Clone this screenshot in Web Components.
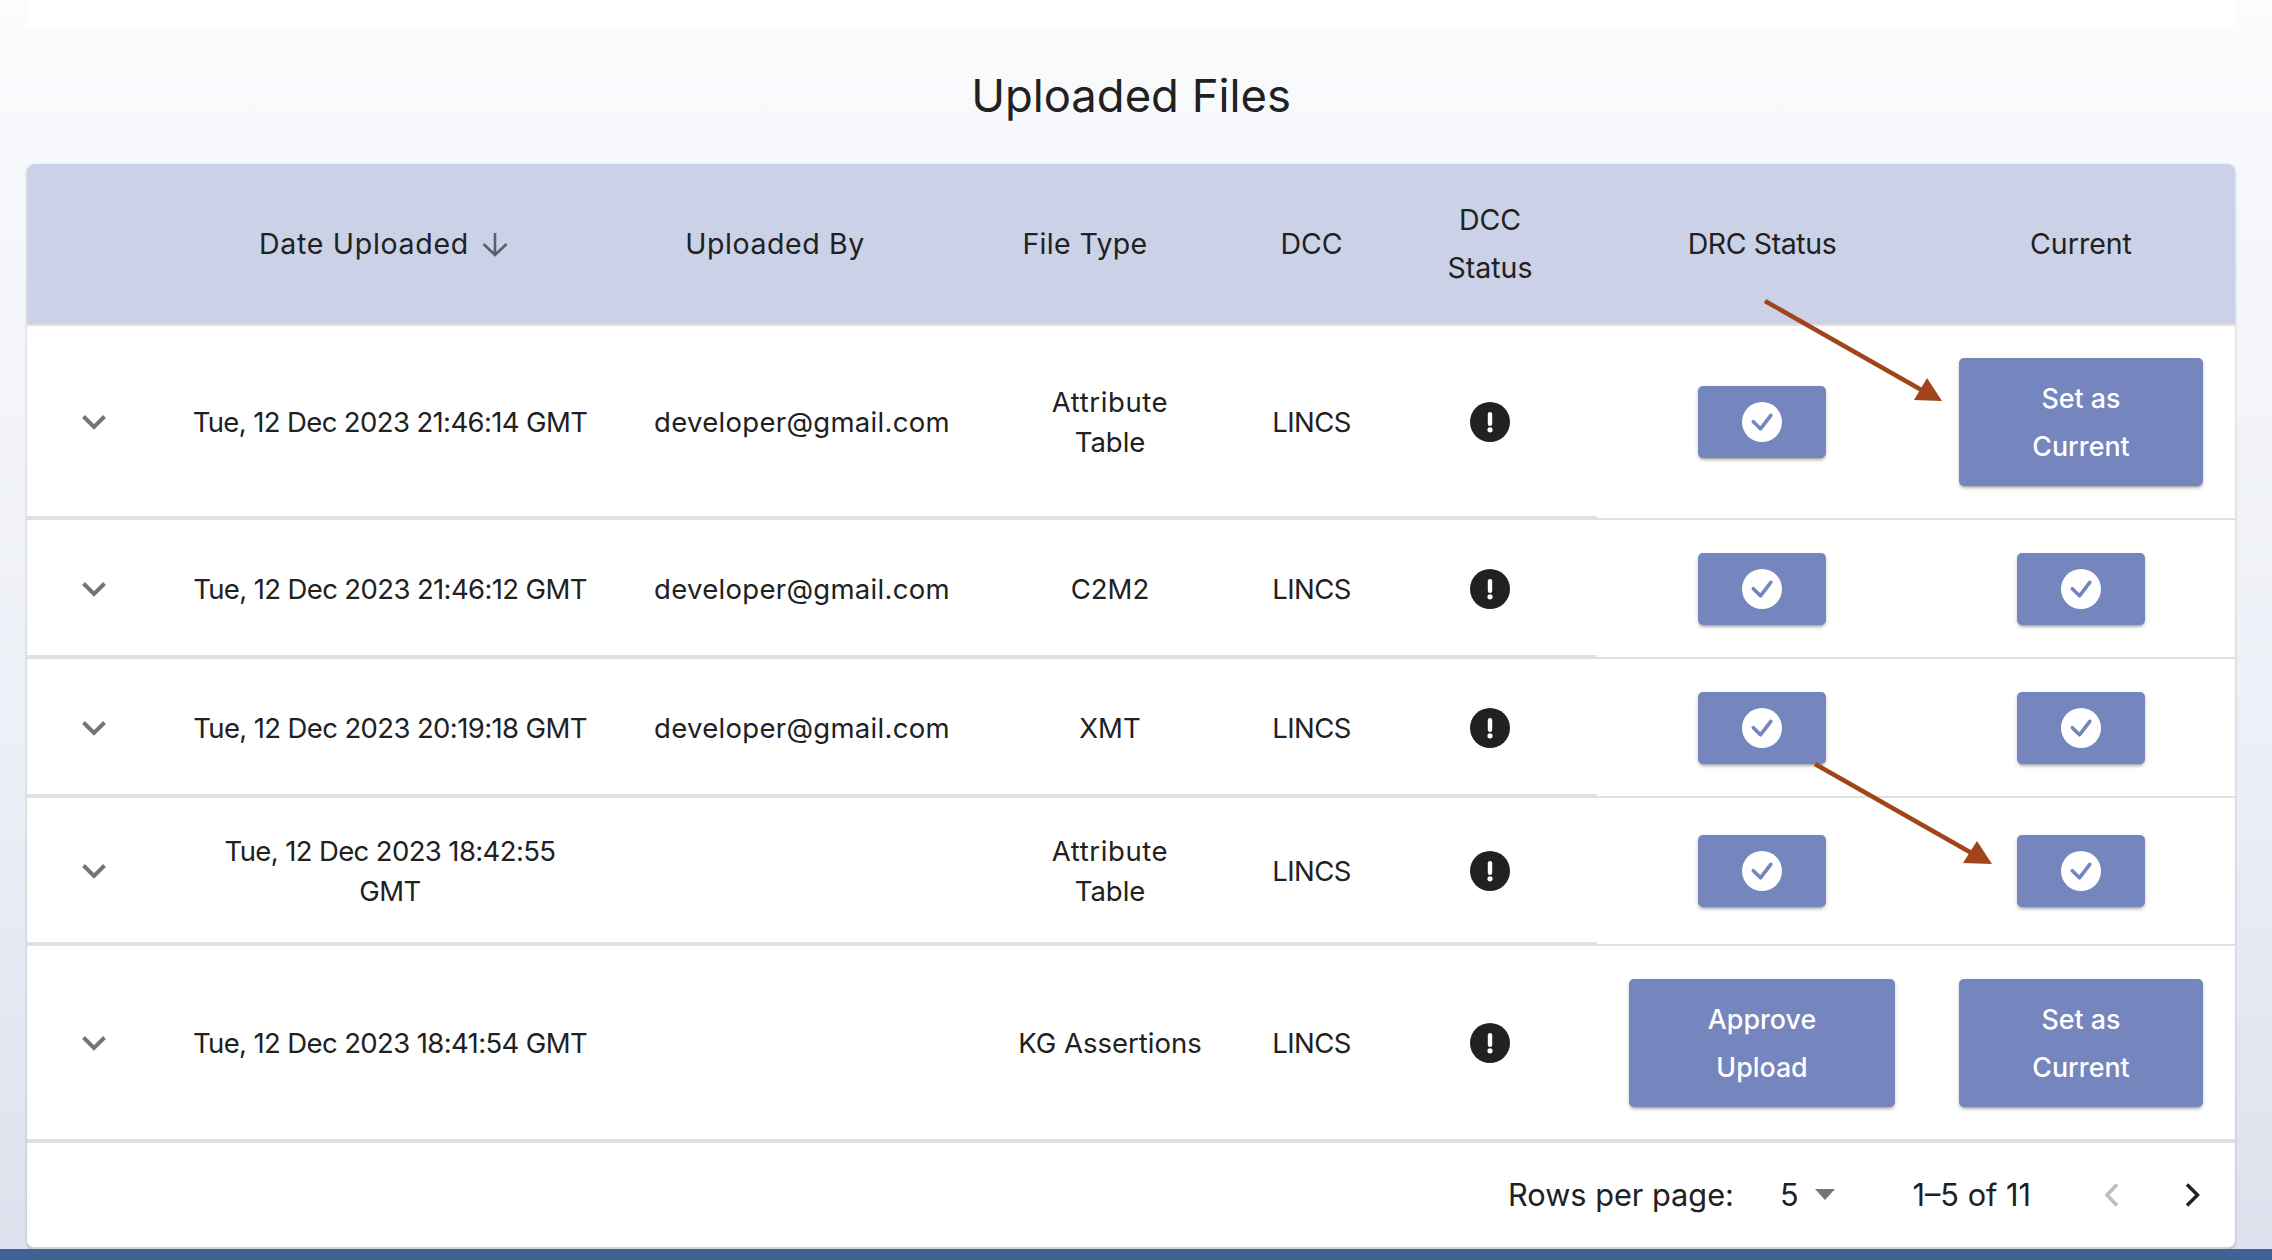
<!DOCTYPE html>
<html><head><meta charset="utf-8"><style>
html,body{margin:0;height:1260px;overflow:hidden}
body{font-family:"Inter","Liberation Sans",sans-serif;color:#212121}
</style></head><body>
<uploads-page>
  <page-title>Uploaded Files</page-title>
  <files-card>
    <head-row></head-row>
    <file-row date="Tue, 12 Dec 2023 21:46:14 GMT" by="developer@gmail.com" type="Attribute Table" current="Set as|Current" h="194"></file-row>
    <file-row date="Tue, 12 Dec 2023 21:46:12 GMT" by="developer@gmail.com" type="C2M2" h="139"></file-row>
    <file-row date="Tue, 12 Dec 2023 20:19:18 GMT" by="developer@gmail.com" type="XMT" h="139"></file-row>
    <file-row date="Tue, 12 Dec 2023 18:42:55 GMT" by="" type="Attribute Table" h="148"></file-row>
    <file-row date="Tue, 12 Dec 2023 18:41:54 GMT" by="" type="KG Assertions" drc="Approve|Upload" current="Set as|Current" h="197" last></file-row>
    <pager-bar></pager-bar>
  </files-card>
</uploads-page>
<script>
const COLS='131px 464px 358px 260px 141px 216px 330px 308px';
const CHECK=`<svg width="40" height="40" viewBox="0 0 40 40"><circle cx="20" cy="20" r="20" fill="#fff"/><path d="M11.300 19.700L18.500 26.800 28.800 13.300" fill="none" stroke="#7585bd" stroke-width="3.600" stroke-linecap="round" stroke-linejoin="round"/></svg>`;
class Base extends HTMLElement{
  render(html){(this.shadowRoot||this.attachShadow({mode:'open'})).innerHTML=html;}
}
customElements.define('uploads-page',class extends Base{connectedCallback(){this.render(`<style>
:host{display:flex;flex-direction:column;height:1260px;box-sizing:border-box;padding:0 37px 0 27px;position:relative;background:linear-gradient(180deg,#fbfcfd 0%,#f7f8fb 12%,#eceff6 60%,#dde1ed 100%);}
.top{height:27px;background:#fff;flex:none}
footer{position:absolute;left:0;right:0;bottom:0;height:11px;background:#3f6394}
.arrows{position:absolute;left:0;top:0;pointer-events:none}
</style><div class="top"></div><slot></slot><footer></footer>
<svg class="arrows" width="2272" height="1260">
<path d="M1765 301L1925 392" stroke="#a0441a" stroke-width="4.500" fill="none"/><path d="M1942 401L1927 378L1914 400Z" fill="#a0441a"/>
<path d="M1815 764L1975 855" stroke="#a0441a" stroke-width="4.500" fill="none"/><path d="M1992 864L1977 841L1963 863Z" fill="#a0441a"/>
</svg>`);}});
customElements.define('page-title',class extends Base{connectedCallback(){this.render(`<style>
:host{display:flex;height:137px;align-items:center;justify-content:center;font-size:45.400px;font-weight:400;color:#212121;flex:none}
</style><slot></slot>`);}});
customElements.define('files-card',class extends Base{connectedCallback(){this.render(`<style>
:host{display:block;background:#fff;border-radius:8px;overflow:hidden;height:1085px;box-sizing:border-box;border-bottom:2px solid #d4d4d4;box-shadow:0 1px 3px rgba(0,0,50,.25);flex:none}
</style><slot></slot>`);}});
customElements.define('head-row',class extends Base{connectedCallback(){this.render(`<style>
:host{display:grid;grid-template-columns:${COLS};height:162px;box-sizing:border-box;background:#cbd1e6;border-bottom:2px solid #e0e0e0;font-size:28.500px;font-weight:400;line-height:48px;text-align:center}
div{display:flex;align-items:center;justify-content:center;padding-right:var(--o,0);padding-left:var(--p,0);letter-spacing:var(--l,0)}
span{display:block}
svg{margin-left:12px}
</style><div></div><div style="--o:12px;--l:.7px">Date Uploaded<svg width="28" height="28" viewBox="0 0 28 28"><path d="M14 3v22M2.500 14l11.500 11 11.500-11" fill="none" stroke="#5a5f6e" stroke-width="2.600"/></svg></div><div style="--o:52px;--l:.6px">Uploaded By</div><div style="--o:50px;--l:.35px">File Type</div><div style="--p:2px">DCC</div><div style="--p:2px"><span>DCC<br>Status</span></div><div style="--l:-.4px">DRC Status</div><div>Current</div>`);}});
customElements.define('act-button',class extends Base{connectedCallback(){this.render(`<style>
:host{display:flex;align-items:center;justify-content:center;box-sizing:border-box;background:#7585bd;color:#fff;border-radius:5px;box-shadow:0 3px 3px -2px rgba(0,0,0,.3),0 2px 4px rgba(0,0,0,.18);font-size:26.800px;font-weight:500;line-height:48px;text-align:center;}
:host([icon]){width:128px;height:72px}
:host(:not([icon])){height:128px;padding:16px 32px}
svg{display:block}
</style><slot></slot>`);}});
customElements.define('file-row',class extends Base{connectedCallback(){
 const a=n=>this.getAttribute(n)||'';
 const btn=(t,w)=>t?`<act-button style="width:${w}px"><span>${t.replace('|','<br>')}</span></act-button>`:`<act-button icon>${CHECK}</act-button>`;
 const type=a('type').replace('Attribute Table','<span style="letter-spacing:.6px">Attribute</span><br>Table');
 const date=a('date').includes('18:42')?'Tue, 12 Dec 2023 18:42:55<br>GMT':a('date');
 this.render(`<style>
:host{display:grid;grid-template-columns:${COLS};height:${a('h')}px;font-size:27.500px;line-height:40px;text-align:center;color:#212121}
div{display:flex;align-items:center;justify-content:center;box-sizing:border-box;border-bottom:4px solid #e0e0e0;padding-top:2px}
.r{border-bottom:2px solid #e0e0e0;padding-top:0}
:host([last]) div{padding-top:0}
:host([last]) .r{border-bottom-width:4px}
.c{padding-left:3px}
.e{padding-left:2px}
.b{padding-left:2px}
svg{display:block}
</style>
<div class="c"><svg width="24" height="16" viewBox="0 0 24 16"><path d="M1.500 2.500L12 13 22.500 2.500" fill="none" stroke="#757575" stroke-width="4"/></svg></div>
<div style="letter-spacing:-.62px"><span>${date}</span></div><div class="b" style="letter-spacing:.3px"><span>${a('by')}</span></div><div><span>${type}</span></div><div class="b" style="letter-spacing:-.6px"><span>LINCS</span></div>
<div class="e"><svg width="40" height="40" viewBox="0 0 40 40"><circle cx="20" cy="20" r="20" fill="#212121"/><rect x="17.800" y="10" width="4.400" height="14" rx="2.200" fill="#fff"/><circle cx="20" cy="27.800" r="2.600" fill="#fff"/></svg></div>
<div class="r">${btn(a('drc'),266)}</div><div class="r">${btn(a('current'),244)}</div>`);}});
customElements.define('pager-bar',class extends Base{connectedCallback(){this.render(`<style>
:host{display:flex;align-items:center;justify-content:flex-end;height:103px;font-size:30.700px;color:#212121;padding-right:35px}
.s{margin-left:46px;display:flex;align-items:center;gap:16px}
.n{margin-left:78px}
svg{display:block}
.p{margin-left:73px}.q{margin-left:65px}
</style><span>Rows per page:</span><span class="s">5<svg width="20" height="11" viewBox="0 0 20 11"><path d="M0 0h20L10 11z" fill="#757575"/></svg></span><span class="n">1–5 of 11</span>
<svg class="p" width="15" height="24" viewBox="0 0 15 24"><path d="M13 1.500L3 12l10 10.500" fill="none" stroke="#bdbdbd" stroke-width="3.500"/></svg>
<svg class="q" width="16" height="24" viewBox="0 0 16 24"><path d="M3 1.500L13.500 12 3 22.500" fill="none" stroke="#212121" stroke-width="3.500"/></svg>`);}});
</script>
</body></html>
